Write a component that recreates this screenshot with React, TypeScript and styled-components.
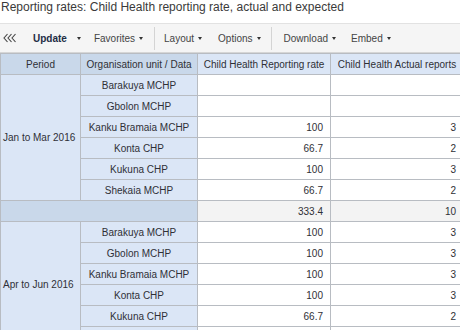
import React from "react";
import styled, { createGlobalStyle } from "styled-components";

const Global = createGlobalStyle`
  html, body { margin: 0; padding: 0; background: #fff; }
  body { font-family: "Liberation Sans", Arial, sans-serif; overflow: hidden; }
`;

const Page = styled.div`
  width: 460px;
  height: 330px;
  overflow: hidden;
  display: flex;
  flex-direction: column;
`;

const Title = styled.div`
  height: 23px;
  padding: 0 0 0 1px;
  font-size: 12px;
  line-height: 14px;
  color: #3a3a3a;
  box-sizing: border-box;
  flex-shrink: 0;
`;

const Toolbar = styled.div`
  height: 30px;
  flex-shrink: 0;
  box-sizing: border-box;
  background: #f5f5f5;
  border-top: 1px solid #e2e2e2;
  border-bottom: 1px solid #d6d6d6;
  display: flex;
  align-items: center;
  font-size: 10px;
  color: #3c3c3c;
`;

const Collapse = styled.div`
  width: 27px;
  padding-left: 3px;
  display: flex;
  align-items: center;
`;

const ToolButton = styled.div<{ $bold?: boolean; $ml: number }>`
  margin-left: ${(p) => p.$ml}px;
  display: flex;
  align-items: center;
  gap: ${(p) => (p.$bold ? 10 : 4)}px;
  font-weight: ${(p) => (p.$bold ? 700 : 400)};
  color: ${(p) => (p.$bold ? "#1e2d45" : "#444")};
  white-space: nowrap;
`;

const Caret = styled.span`
  display: inline-block;
  width: 0;
  height: 0;
  border-left: 2.5px solid transparent;
  border-right: 2.5px solid transparent;
  border-top: 3px solid #333;
  margin-top: 1px;
`;

const Sep = styled.div<{ $ml: number }>`
  margin-left: ${(p) => p.$ml}px;
  width: 1px;
  height: 23px;
  background: #d4d4d4;
`;

const Table = styled.table`
  border-collapse: collapse;
  table-layout: fixed;
  width: 463px;
  font-size: 10px;
  color: #2f3036;
  flex-shrink: 0;
`;

const Cell = styled.td<{ $kind: "dim" | "label" | "head" | "value" | "total" | "dimtotal" }>`
  border: 1px solid #b8bcc2;
  height: 21px;
  padding: 0 4px;
  box-sizing: border-box;
  white-space: nowrap;
  overflow: hidden;
  font-weight: 400;
  text-align: ${(p) => (p.$kind === "value" || p.$kind === "total" ? "right" : "center")};
  background: ${(p) =>
    p.$kind === "dim" || p.$kind === "dimtotal"
      ? "#c9d8ea"
      : p.$kind === "label" || p.$kind === "head"
      ? "#dbe6f6"
      : p.$kind === "total"
      ? "#f3f3f3"
      : "#ffffff"};
  padding-right: ${(p) => (p.$kind === "value" || p.$kind === "total" ? "7px" : "4px")};
`;

const PeriodCell = styled(Cell)`
  text-align: left;
  padding-left: 2px;
`;

const Chevrons = () => (
  <svg width="15" height="10" viewBox="0 0 15 10">
    {[0, 4, 8].map((x) => (
      <polyline
        key={x}
        points={`${x + 4.5},1 ${x + 1},5 ${x + 4.5},9`}
        fill="none"
        stroke="#444"
        strokeWidth="1.1"
      />
    ))}
  </svg>
);

type Row = { org: string; rate: string; actual: string };

const q1: Row[] = [
  { org: "Barakuya MCHP", rate: "", actual: "" },
  { org: "Gbolon MCHP", rate: "", actual: "" },
  { org: "Kanku Bramaia MCHP", rate: "100", actual: "3" },
  { org: "Konta CHP", rate: "66.7", actual: "2" },
  { org: "Kukuna CHP", rate: "100", actual: "3" },
  { org: "Shekaia MCHP", rate: "66.7", actual: "2" },
];

const q2: Row[] = [
  { org: "Barakuya MCHP", rate: "100", actual: "3" },
  { org: "Gbolon MCHP", rate: "100", actual: "3" },
  { org: "Kanku Bramaia MCHP", rate: "100", actual: "3" },
  { org: "Konta CHP", rate: "100", actual: "3" },
  { org: "Kukuna CHP", rate: "66.7", actual: "2" },
  { org: "Shekaia MCHP", rate: "66.7", actual: "2" },
];

const Group = ({ period, rows }: { period: string; rows: Row[] }) => (
  <>
    {rows.map((r, i) => (
      <tr key={r.org}>
        {i === 0 && (
          <PeriodCell $kind="label" rowSpan={rows.length}>
            {period}
          </PeriodCell>
        )}
        <Cell $kind="label">{r.org}</Cell>
        <Cell $kind="value">{r.rate}</Cell>
        <Cell $kind="value">{r.actual}</Cell>
      </tr>
    ))}
  </>
);

export default function App() {
  return (
    <Page>
      <Global />
      <Title>Reporting rates: Child Health reporting rate, actual and expected</Title>
      <Toolbar>
        <Collapse>
          <Chevrons />
        </Collapse>
        <ToolButton $bold $ml={3}>
          <span>Update</span>
          <Caret />
        </ToolButton>
        <ToolButton $ml={13}>
          <span>Favorites</span>
          <Caret />
        </ToolButton>
        <Sep $ml={11} />
        <ToolButton $ml={9}>
          <span>Layout</span>
          <Caret />
        </ToolButton>
        <ToolButton $ml={16}>
          <span>Options</span>
          <Caret />
        </ToolButton>
        <Sep $ml={10} />
        <ToolButton $ml={12}>
          <span>Download</span>
          <Caret />
        </ToolButton>
        <ToolButton $ml={15}>
          <span>Embed</span>
          <Caret />
        </ToolButton>
      </Toolbar>
      <Table>
        <colgroup>
          <col style={{ width: 80 }} />
          <col style={{ width: 117 }} />
          <col style={{ width: 133 }} />
          <col style={{ width: 133 }} />
        </colgroup>
        <tbody>
          <tr>
            <Cell as="th" $kind="dim">Period</Cell>
            <Cell as="th" $kind="dim">Organisation unit / Data</Cell>
            <Cell as="th" $kind="head">Child Health Reporting rate</Cell>
            <Cell as="th" $kind="head">Child Health Actual reports</Cell>
          </tr>
          <Group period="Jan to Mar 2016" rows={q1} />
          <tr>
            <Cell $kind="dimtotal" colSpan={2}></Cell>
            <Cell $kind="total">333.4</Cell>
            <Cell $kind="total">10</Cell>
          </tr>
          <Group period="Apr to Jun 2016" rows={q2} />
        </tbody>
      </Table>
    </Page>
  );
}
